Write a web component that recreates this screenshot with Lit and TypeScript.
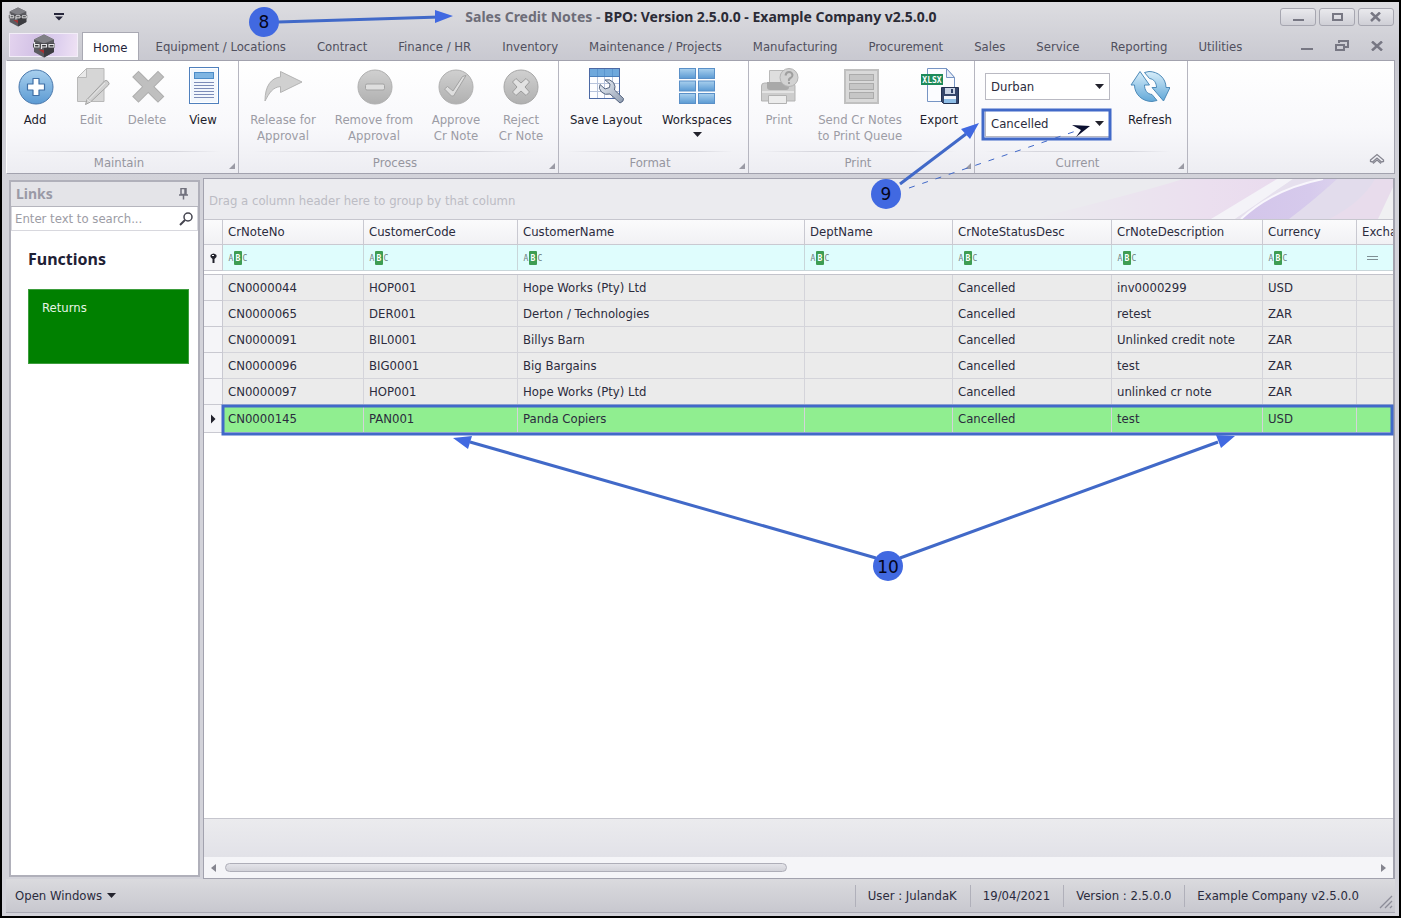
import { LitElement, html, css, svg, nothing } from "lit";
import { customElement, state } from "lit/decorators.js";

const TABS = [
  "Home", "Equipment / Locations", "Contract", "Finance / HR", "Inventory",
  "Maintenance / Projects", "Manufacturing", "Procurement", "Sales", "Service",
  "Reporting", "Utilities",
];

const COLUMNS = [
  "CrNoteNo", "CustomerCode", "CustomerName", "DeptName", "CrNoteStatusDesc",
  "CrNoteDescription", "Currency", "Excha",
];

const ROWS = [
  ["CN0000044", "HOP001", "Hope Works (Pty) Ltd", "", "Cancelled", "inv0000299", "USD", ""],
  ["CN0000065", "DER001", "Derton / Technologies", "", "Cancelled", "retest", "ZAR", ""],
  ["CN0000091", "BIL0001", "Billys Barn", "", "Cancelled", "Unlinked credit note", "ZAR", ""],
  ["CN0000096", "BIG0001", "Big Bargains", "", "Cancelled", "test", "ZAR", ""],
  ["CN0000097", "HOP001", "Hope Works (Pty) Ltd", "", "Cancelled", "unlinked cr note", "ZAR", ""],
  ["CN0000145", "PAN001", "Panda Copiers", "", "Cancelled", "test", "USD", ""],
];

const icon = (body: unknown, w = 40, h = 40) => html`
  <svg class="icon" width=${w} height=${h} viewBox="0 0 ${w} ${h}" aria-hidden="true">
    <defs>
      <linearGradient id="blue" x1="0" y1="0" x2="0" y2="1">
        <stop offset="0" stop-color="#a9d0ee" /><stop offset="1" stop-color="#5b9ad3" />
      </linearGradient>
      <linearGradient id="aqua" x1="0" y1="0" x2="0" y2="1">
        <stop offset="0" stop-color="#d8eefa" /><stop offset="1" stop-color="#62a8d8" />
      </linearGradient>
      <linearGradient id="grey" x1="0" y1="0" x2="0" y2="1">
        <stop offset="0" stop-color="#d0d0d0" /><stop offset="1" stop-color="#b0b0b0" />
      </linearGradient>
      <linearGradient id="steel" x1="0" y1="0" x2="1" y2="1">
        <stop offset="0" stop-color="#eef2f8" /><stop offset="1" stop-color="#8d9bb0" />
      </linearGradient>
    </defs>
    ${body}
  </svg>`;

const ICONS: Record<string, unknown> = {
  add: svg`
    <circle cx="21" cy="20" r="17" fill="url(#blue)" stroke="#4a78ac" />
    <path d="M18 11.500h6v5.500h5.500v6h-5.500v5.500h-6v-5.500h-5.500v-6h5.500z" fill="#fff" stroke="#3f6fa5" stroke-width="1.200" stroke-linejoin="round" />`,
  edit: svg`
    <path d="M15.500 1.500h17.500v33h-26.500v-24z" fill="#d6d6d6" stroke="#b8b8b8" />
    <path d="M15.500 1.500v9h-9z" fill="#e9e9e9" stroke="#b8b8b8" />
    <path d="M16 32.500l17.500-18.500q1.500-1.500 3.500 0.500t0.500 3.500l-18 17l-5 2.500z" fill="#d0d0d0" stroke="#a2a2a2" />
    <path d="M16 32.500l4 3M18.500 32l15.500-16" fill="none" stroke="#e8e8e8" />`,
  delete: svg`
    <g fill="none" stroke-linecap="square" stroke-linejoin="round">
      <path d="M11.500 10L31 29.500M31 10L11.500 29.500" stroke="#aeaeae" stroke-width="9" />
      <path d="M11.500 10L31 29.500M31 10L11.500 29.500" stroke="#bfbfbf" stroke-width="7" />
    </g>`,
  view: svg`
    <rect x="6.500" y="0.500" width="29" height="36" fill="#fff" stroke="#4f80bd" />
    <rect x="8" y="2" width="26" height="33" fill="#f2f7fd" />
    <rect x="11.500" y="5.500" width="19" height="6" fill="#7fb5e2" stroke="#4c8cc8" />
    <path d="M11 15.500h20M11 18.500h20M11 21.500h20M11 24.500h20M11 27.500h20M11 30.500h20" stroke="#7c8cb8" />`,
  release: svg`
    <path d="M2 34c0-15 6-23 15.500-24v-5.500l21.500 10.500l-21.500 10.500v-6c-8 1-11 6-15.500 14.500z" fill="#d0d0d0" stroke="#b4b4b4" stroke-linejoin="round" />`,
  remove: svg`
    <circle cx="21" cy="20" r="17" fill="url(#grey)" stroke="#b0b0b0" />
    <rect x="11.500" y="17" width="19" height="6" rx="1.500" fill="#dedede" stroke="#a3a3a3" />`,
  approve: svg`
    <circle cx="20" cy="20" r="17" fill="url(#grey)" stroke="#b0b0b0" />
    <path d="M8.500 22l3-2.500l5.500 4.500l9.500-14.500l3.500-1l-12.500 20.500h-2z" fill="#dedede" stroke="#a3a3a3" stroke-linejoin="round" />`,
  reject: svg`
    <circle cx="20" cy="20" r="17" fill="url(#grey)" stroke="#a6a6a6" />
    <path d="M15 11.500l5 4.500l5-4.500l3.500 3.500l-4.500 5l4.500 5l-3.500 3.500l-5-4.500l-5 4.500l-3.500-3.500l4.500-5l-4.500-5z" fill="#e2e2e2" stroke="#9b9b9b" stroke-linejoin="round" />`,
  layout: svg`
    <rect x="3.500" y="1.500" width="30" height="30" fill="#fdfdff" stroke="#4c69a4" />
    <rect x="4" y="2" width="29" height="7" fill="#6ea8dc" />
    <path d="M4 9.500h29" stroke="#4a7fbb" />
    <path d="M4 16.500h29M4 24.500h29M11.500 10v21M18.500 10v21M26.500 10v21" stroke="#b8c4dc" />
    <path d="M11.500 2v7M18.500 2v7M26.500 2v7" stroke="#5a95cf" />
    <path d="M19 13q5-1.500 8.500 2.500q2.500 4 1 7.500l9 8.500q0.500 3-3.500 4.500l-10-9q-5 1.500-8.500-2t-1.500-7.500l5 4.500l4.500-1.500l0.500-3.500z" fill="url(#steel)" stroke="#55647f" stroke-linejoin="round" />`,
  workspaces: svg`
    <g fill="url(#blue)" stroke="#5a90c8">
      <rect x="2.500" y="1.500" width="16" height="10" /><rect x="21.500" y="1.500" width="16" height="10" />
      <rect x="2.500" y="14" width="16" height="10" /><rect x="21.500" y="14" width="16" height="10" />
      <rect x="2.500" y="26.500" width="16" height="10" /><rect x="21.500" y="26.500" width="16" height="10" />
    </g>`,
  print: svg`
    <path d="M10.500 17v-13.500h18v13.500z" fill="#dedede" stroke="#b9b9b9" />
    <path d="M2.500 34v-15q0-3 3-3h28q2.500 0 2.500 3v15z" fill="#cdcdcd" stroke="#b3b3b3" />
    <path d="M8 15h22v5q0 3-3 3h-16q-3 0-3-3z" fill="#a9a9a9" />
    <path d="M3 25h32" stroke="#e4e4e4" stroke-width="2" />
    <path d="M9.500 36.500v-8h18v8z" fill="#ececec" stroke="#b2b2b2" />
    <circle cx="30" cy="10.500" r="9" fill="#d2d2d2" stroke="#b3b3b3" />
    <path d="M26.500 8.500q0.500-3.500 3.500-3.500t3.500 3q0 2-2 3t-1.500 3M30 15v2" fill="none" stroke="#9f9f9f" stroke-width="2" />`,
  queue: svg`
    <rect x="5" y="3" width="33" height="33" fill="#d9d9d9" stroke="#c0c0c0" stroke-width="2" />
    <g fill="#c6c6c6" stroke="#ababab"><rect x="9.500" y="7.500" width="24" height="6" /><rect x="9.500" y="16.500" width="24" height="6" /><rect x="9.500" y="25.500" width="24" height="6" /></g>`,
  export: svg`
    <path d="M8.500 1.500h19l8 9v24h-27z" fill="#fbfcff" stroke="#7795c4" />
    <path d="M27.500 1.500v9h8z" fill="#e8eef8" stroke="#7795c4" />
    <rect x="2" y="7" width="22" height="11" fill="#1d8a5a" />
    <text x="13" y="16" text-anchor="middle" font-family="DejaVu Sans Mono" font-weight="bold" font-size="8" fill="#fff">XLSX</text>
    <path d="M22.500 20.500h17v16h-15l-2-2z" fill="#35466b" stroke="#22304f" />
    <rect x="26" y="21" width="10" height="6" fill="#c9d3e4" /><rect x="32" y="22" width="2" height="4" fill="#2d3f66" />
    <rect x="25" y="29" width="12" height="7" fill="#8ebde6" /><rect x="25" y="29" width="12" height="3" fill="#f3f6fb" />`,
  refresh: svg`
    <g fill="url(#aqua)" stroke="#4d8ab8" stroke-linejoin="round">
      <path d="M33.500 34L40 20.500h-4C36 11 28 4.500 19 4.500L14.500 5.500l5 6c4.500 0.500 7 4.500 7 9h-4.500z" />
      <path d="M10 4.500L1 18h3.500C4.500 27 12 34.500 22 34.500L27 33.500l-5-6c-5-0.500-7.500-4.500-7.500-9.500h5z" />
    </g>`,
};

const hexLogo = (size: number) => html`
  <svg width=${size} height=${size} viewBox="0 0 24 24" aria-hidden="true">
    <path d="M12 0.500l10 5v12.500l-10 5.500l-10-5.500v-12.500z" fill="#5b5b60" />
    <path d="M12 0.500l10 5l-10 4l-10-4z" fill="#808086" />
    <path d="M12 14l10-4v8l-10 5.500z" fill="#3c3c40" />
    <path d="M1 9.500h22v4h-22z" fill="#3a3a3e" />
    <path d="M2.500 8v5h4.500v-2.500h-4.500M9.500 15v-4.500h5v2.500h-5M17 10.500h5v2.500h-5z" fill="none" stroke="#e6e6e8" stroke-width="1.200" />
    <path d="M6.500 15.500l5.500 4v-3.500z" fill="#a93030" />
  </svg>`;

const caret = (w = 9, h = 5) => html`
  <svg class="caret" width=${w} height=${h} viewBox="0 0 9 5" aria-hidden="true"><path d="M0 0h9l-4.500 5z" fill="#22222c" /></svg>`;

type Item = { id: string; lines: string[]; width: string; off?: boolean; menu?: boolean };
const GROUPS: { name: string; items: Item[] }[] = [
  { name: "Maintain", items: [
    { id: "add", lines: ["Add"], width: "w56" },
    { id: "edit", lines: ["Edit"], width: "w56", off: true },
    { id: "delete", lines: ["Delete"], width: "w56", off: true },
    { id: "view", lines: ["View"], width: "w56" },
  ] },
  { name: "Process", items: [
    { id: "release", lines: ["Release for", "Approval"], width: "w88", off: true },
    { id: "remove", lines: ["Remove from", "Approval"], width: "w94", off: true },
    { id: "approve", lines: ["Approve", "Cr Note"], width: "w70", off: true },
    { id: "reject", lines: ["Reject", "Cr Note"], width: "w60", off: true },
  ] },
  { name: "Format", items: [
    { id: "layout", lines: ["Save Layout"], width: "w94" },
    { id: "workspaces", lines: ["Workspaces"], width: "w88", menu: true },
  ] },
  { name: "Print", items: [
    { id: "print", lines: ["Print"], width: "w60", off: true },
    { id: "queue", lines: ["Send Cr Notes", "to Print Queue"], width: "w102", off: true },
    { id: "export", lines: ["Export"], width: "w56" },
  ] },
];

@customElement("app-root")
export class AppRoot extends LitElement {
  @state() private tab = "Home";
  @state() private selected = 5;

  static styles = css`
    :host { display: block; font: 13px/16px "DejaVu Sans Condensed", "Noto Sans", sans-serif; color: #2b2b3d; }
    * { box-sizing: border-box; }
    button, input, select { font: inherit; color: inherit; margin: 0; padding: 0; border: 0; background: none; }
    svg { display: block; flex: none; }
    .frame { position: relative; display: flex; flex-direction: column; min-height: 100vh; border: 2px solid #000; padding: 0 4px 3px; background: linear-gradient(#dddde1, #c8c8d0 60px, #d3d3da 180px, #d3d3da); overflow: hidden; }
    .title { display: grid; grid-template-columns: 1fr auto 1fr; align-items: center; height: 29px; padding: 0 1px 0 2px; }
    .title h1 { margin: 0; font-family: "Noto Sans", sans-serif; font-size: 14px; line-height: 16px; font-weight: bold; white-space: pre; color: #2b2b36; }
    .title h1 span { color: #6d6d78; }
    .quick { display: flex; align-items: center; gap: 26px; }
    .winbtns { display: flex; justify-content: flex-end; gap: 3px; }
    .winbtn { display: grid; place-items: center; width: 36px; height: 18px; border: 1px solid #a6a6b0; border-radius: 3px; background: linear-gradient(#e9e9ed, #cfcfd6); }
    .tabs { display: flex; align-items: stretch; gap: 3px; height: 29px; padding: 1px 0 0 3px; }
    .appbtn { display: grid; place-items: center; width: 69px; height: 24px; margin: 1px 1px 0 0; border: 1px solid #f3eef8; background: linear-gradient(100deg, #e3d3ee, #d3c2e6 40%, #ddcfee 70%, #efe2f4); }
    .tab { padding: 2px 14px 0; color: #50505e; white-space: nowrap; }
    .tab.on { padding: 2px 10px 0; background: #fff; border: 1px solid #a9a9b3; border-bottom: 0; color: #23233a; }
    .mdi { display: flex; align-items: center; gap: 22px; margin-left: auto; padding-right: 12px; }
    .ribbon { display: flex; height: 114px; border: 1px solid #a2a2ae; border-left-color: #fff; background: linear-gradient(#fff, #f8f8fb 60%, #ededf2); }
    .group { position: relative; display: flex; flex-direction: column; border-right: 1px solid #b6b6c0; padding-right: 7px; }
    .items { display: flex; flex: 1; padding-top: 6px; }
    .group h2 { margin: 0; height: 22px; padding-top: 3px; border-top: 1px solid transparent; border-image: linear-gradient(90deg, transparent 5%, #d6d6dd 30%, #d6d6dd 75%, transparent 95%) 1; font-size: 13px; line-height: 16px; font-weight: normal; text-align: center; color: #96969f; }
    .launch { position: absolute; right: 3px; bottom: 4px; }
    .item { display: flex; flex-direction: column; align-items: center; white-space: nowrap; color: #1d1d2c; }
    .item:disabled { color: #9c9ca5; }
    .item .icon { margin-bottom: 5px; }
    .item .caret { margin-top: 4px; }
    .w56 { width: 56px; } .w60 { width: 60px; } .w70 { width: 70px; } .w88 { width: 88px; } .w94 { width: 94px; } .w102 { width: 102px; }
    .combos { display: flex; flex-direction: column; gap: 10px; padding: 6px 10px 0 10px; }
    .combo { display: flex; align-items: center; position: relative; width: 125px; height: 27px; border: 1px solid #b9b9c2; background: #fff; }
    .combo select { appearance: none; flex: 1; height: 100%; padding-left: 5px; outline: 0; }
    .combo .caret { position: absolute; right: 5px; pointer-events: none; }
    .collapse { margin: auto 9px 7px auto; }
    .body { display: flex; flex: 1; gap: 3px; padding: 4px 0 0 3px; min-height: 0; }
    .links { display: flex; flex-direction: column; width: 191px; margin: 2px 0; border: 2px solid #b0b0ba; background: #fff; }
    .links header { display: flex; align-items: center; justify-content: space-between; height: 25px; padding: 0 10px 0 5px; background: #e4e4e8; border-bottom: 1px solid #b5b5bd; }
    .links h2 { margin: 0; font-family: "Noto Sans", sans-serif; font-size: 14px; line-height: 16px; color: #9a9aa6; }
    .search { display: flex; align-items: center; height: 24px; padding: 0 4px 0 3px; border: 1px solid #d8d8de; border-top: 0; }
    .search input { flex: 1; min-width: 0; outline: 0; }
    .search input::placeholder { color: #9c9ca5; opacity: 1; }
    .fn { padding: 18px 9px 0 17px; }
    .fn h3 { margin: 0 0 20px; font-family: "Noto Sans", sans-serif; font-size: 16px; line-height: 20px; color: #1f2135; }
    .tile { display: block; width: 100%; height: 75px; padding: 10px 13px; background: #008000; border: 1px solid #3d9d3d; color: #e6f5e6; text-decoration: none; }
    .grid { display: flex; flex-direction: column; flex: 1; min-width: 0; border: 1px solid #a2a2ae; border-right-width: 2px; background: #fff; overflow: hidden; }
    .drop { display: flex; justify-content: space-between; align-items: stretch; height: 41px; border-bottom: 1px solid #c6c6ce; background: #ebebef; color: #bcbcc4; }
    .drop p { margin: 14px 0 0 5px; white-space: nowrap; }
    .scroll { flex: 1; overflow: hidden; }
    table { width: 1241px; table-layout: fixed; border-collapse: separate; border-spacing: 0; }
    th, td { padding: 0 0 0 5px; height: 26px; text-align: left; font-weight: normal; white-space: nowrap; border-right: 1px solid #d4d4da; border-bottom: 1px solid #d4d4da; }
    th { height: 25px; background: linear-gradient(#fbfbfc, #f1f1f4); border-color: #c9c9d1; }
    .filter td { background: #dffdfd; height: 26px; border-color: #c9d6da; }
    .filter label { display: flex; align-items: center; }
    .filter input { width: 50px; height: 20px; outline: 0; }
    .gap td { height: 4px; padding: 0; border-bottom: 1px solid #c3c3cb; border-right: 0; background: #fff; }
    tbody td { background: #ebebeb; }
    tbody tr.sel td { height: 28px; background: #90ee90; }
    tbody td.ind, tbody tr.sel td.ind, .filter td.ind { padding: 0 0 0 6px; background: #f5f5f8; border-color: #c9c9d1; }
    .c0 { width: 19px; } .c1 { width: 141px; } .c2 { width: 154px; } .c3 { width: 287px; } .c4 { width: 148px; }
    .c5 { width: 159px; } .c6 { width: 151px; } .c7 { width: 94px; } .c8 { width: 88px; }
    .foot { height: 39px; border-top: 1px solid #c6c6ce; background: linear-gradient(#ebebee, #e2e2e8); }
    .bar { display: flex; align-items: center; gap: 9px; height: 21px; padding: 0 7px; background: #f5f5f8; }
    .track { flex: 1; }
    .thumb { width: 49%; height: 9px; border: 1px solid #aeaeb8; border-radius: 5px; background: linear-gradient(#e4e4e9, #d2d2d9); }
    .status { display: flex; align-items: center; height: 34px; padding: 0 2px 0 9px; border-bottom: 1px solid #a9a9b4; background: linear-gradient(#dadade, #c8c8cf); white-space: nowrap; }
    .open { display: flex; align-items: center; gap: 5px; margin-right: auto; }
    .status span { padding: 3px 13px 3px 12px; border-left: 1px solid #b0b0ba; }
    .grip { align-self: flex-end; margin: 0 0 3px 7px; }
    .notes { position: absolute; left: -2px; top: -2px; pointer-events: none; }
    .notes text { font: 17px "DejaVu Sans", sans-serif; fill: #05051a; text-anchor: middle; }
  `;

  private renderItem(i: Item) {
    return html`<button class="item ${i.width}" ?disabled=${i.off}>
      ${icon(ICONS[i.id])}
      ${i.lines.map((l) => html`<span>${l}</span>`)}
      ${i.menu ? caret() : nothing}
    </button>`;
  }

  private launcher() {
    return html`<svg class="launch" width="6" height="6" viewBox="0 0 6 6" aria-hidden="true"><path d="M6 0v6h-6z" fill="#9a9aa4" /></svg>`;
  }

  private combo(label: string, options: string[]) {
    return html`<div class="combo">
      <select aria-label=${label}>${options.map((o) => html`<option>${o}</option>`)}</select>${caret()}
    </div>`;
  }

  private filterIcon(last: boolean) {
    return html`<svg width="20" height="14" viewBox="0 0 20 14" aria-hidden="true">
      ${last
        ? svg`<path d="M5 5.500h11M5 8.500h11" stroke="#7f8f94" />`
        : svg`<rect x="6" width="8" height="14" rx="1" fill="#3e9d52" />
          <g font-family="DejaVu Sans Mono" font-size="8" text-anchor="middle">
            <text x="3" y="10" fill="#6f7f80">A</text><text x="10" y="10" fill="#fff" font-weight="bold">B</text><text x="17" y="10" fill="#6f7f80">C</text>
          </g>`}
    </svg>`;
  }

  private annotations() {
    return html`<svg class="notes" width="1401" height="918" viewBox="0 0 1401 918">
      <g fill="none" stroke="#4169c8" stroke-width="3">
        <path d="M278 22L440 17M900 184L966 134M876 558L470 442M900 558L1218 442" />
        <rect x="983" y="110" width="127" height="29" />
        <rect x="223" y="406" width="1169" height="28" />
        <path d="M909 188L1076 131" stroke-width="1" stroke-dasharray="6 8" />
      </g>
      <g fill="#4169e1">
        <path d="M453 16L435 10v13zM979 123L961 129l9 10zM453 438l19-2l-4 13zM1235 436l-19-1l5 13z" />
        <circle cx="264" cy="22" r="15" /><circle cx="886" cy="194" r="15" /><circle cx="888" cy="566" r="15" />
      </g>
      <path d="M1072 125l18 1l-14 11l5-7z" fill="#0b1030" />
      <text x="264" y="28">8</text><text x="886" y="200">9</text><text x="888" y="573">10</text>
    </svg>`;
  }

  render() {
    return html`<div class="frame">
      <header class="title">
        <div class="quick">${hexLogo(20)}
          <svg width="10" height="8" viewBox="0 0 10 8" aria-hidden="true"><path d="M0 0h10v2h-10zM1 3.500h8l-4 4z" fill="#26263a" /></svg>
        </div>
        <h1><span>Sales Credit Notes - </span>BPO: Version 2.5.0.0 - Example Company v2.5.0.0</h1>
        <div class="winbtns">
          <button class="winbtn" aria-label="Minimize"><svg width="12" height="10" viewBox="0 0 12 10"><path d="M1 8h11" stroke="#777783" stroke-width="2" /></svg></button>
          <button class="winbtn" aria-label="Maximize"><svg width="12" height="10" viewBox="0 0 12 10"><rect x="2" y="2" width="9" height="6" fill="none" stroke="#777783" stroke-width="2" /></svg></button>
          <button class="winbtn" aria-label="Close"><svg width="12" height="10" viewBox="0 0 12 10"><path d="M1 0.500l9 8.500M10 0.500l-9 8.500" stroke="#777783" stroke-width="2.500" /></svg></button>
        </div>
      </header>
      <nav class="tabs">
        <button class="appbtn" aria-label="Application menu">${hexLogo(24)}</button>
        ${TABS.map((t) => html`<button class="tab ${t === this.tab ? "on" : ""}" @click=${() => (this.tab = t)}>${t}</button>`)}
        <div class="mdi">
          <svg width="12" height="12" viewBox="0 0 12 12"><path d="M0 9h12" stroke="#777783" stroke-width="2" /></svg>
          <svg width="14" height="12" viewBox="0 0 14 12"><path d="M4 3v-2h9v6h-3M1 5h8v5h-8z" fill="none" stroke="#777783" stroke-width="2" /></svg>
          <svg width="12" height="10" viewBox="0 0 12 10"><path d="M1 0.500l10 9M11 0.500l-10 9" stroke="#777783" stroke-width="2.500" /></svg>
        </div>
      </nav>
      <section class="ribbon">
        ${GROUPS.map((g) => html`<div class="group">
          <div class="items">${g.items.map((i) => this.renderItem(i))}</div>
          <h2>${g.name}</h2>${this.launcher()}
        </div>`)}
        <div class="group">
          <div class="items">
            <div class="combos">
              ${this.combo("Site", ["Durban"])}
              ${this.combo("Status", ["Cancelled"])}
            </div>
            ${this.renderItem({ id: "refresh", lines: ["Refresh"], width: "w60" })}
          </div>
          <h2>Current</h2>${this.launcher()}
        </div>
        <svg class="collapse" width="16" height="13" viewBox="0 0 16 13"><path d="M1.500 7l6.500-5.500l6.500 5.500v1.500l-2 0.500l-4.500-4l-4.500 4l-2-0.500zM4 10.500l4-3.500l4 3.500" fill="none" stroke="#858590" stroke-width="1.300" /></svg>
      </section>
      <main class="body">
        <aside class="links">
          <header><h2>Links</h2>
            <svg width="9" height="12" viewBox="0 0 9 12"><path d="M2 0.500h5v6h-5zM0 7h9M4.500 7v4.500M6 1v5" fill="none" stroke="#71717d" stroke-width="1.500" /></svg>
          </header>
          <label class="search"><input type="text" placeholder="Enter text to search..." aria-label="Search links" />
            <svg width="14" height="14" viewBox="0 0 14 14"><circle cx="9" cy="5" r="4" fill="none" stroke="#44444f" stroke-width="1.500" /><path d="M6 8l-5 5" stroke="#44444f" stroke-width="2" /></svg>
          </label>
          <div class="fn"><h3>Functions</h3><a class="tile" href="#returns">Returns</a></div>
        </aside>
        <section class="grid">
          <div class="drop"><p>Drag a column header here to group by that column</p>
            <svg width="420" height="40" viewBox="0 0 420 40" aria-hidden="true">
              <defs>
                <linearGradient id="s1" x1="0" x2="1"><stop offset="0" stop-color="#ebebef" /><stop offset="0.700" stop-color="#ebdfef" /><stop offset="1" stop-color="#e9dbee" /></linearGradient>
                <linearGradient id="s2" x1="0" x2="1"><stop offset="0" stop-color="#d3c5ea" /><stop offset="0.450" stop-color="#d6caec" /><stop offset="1" stop-color="#e6e0f0" /></linearGradient>
              </defs>
              <path d="M60 40Q180 10 210 0h100L240 40z" fill="url(#s1)" />
              <path d="M238 40L304 0h16L262 40z" fill="#f4f3f8" />
              <path d="M262 40L320 0h34Q300 14 268 40z" fill="#e6e0ee" />
              <path d="M268 40Q300 10 350 0h70v40z" fill="url(#s2)" />
              <path d="M316 40Q340 22 364 0h56v40z" fill="#e2dcec" />
              <path d="M356 40Q388 24 402 0h18v40z" fill="#e8dcec" />
              <path d="M405 40L420 8v32z" fill="#f0f0f2" />
              <path d="M268 40Q300 10 350 0" fill="none" stroke="#f8f6fc" stroke-width="2" />
            </svg>
          </div>
          <div class="scroll">
            <table>
              <colgroup>${[0, 1, 2, 3, 4, 5, 6, 7, 8].map((n) => html`<col class="c${n}" />`)}</colgroup>
              <thead>
                <tr><th></th>${COLUMNS.map((c) => html`<th scope="col">${c}</th>`)}</tr>
                <tr class="filter">
                  <td class="ind"><svg width="7" height="10" viewBox="0 0 7 10"><path d="M0.500 2q3-3 6 0v2l-2 2v4h-2v-4l-2-2z" fill="#22222c" /><path d="M2 2.500h2" stroke="#fff" /></svg></td>
                  ${COLUMNS.map((c, n) => html`<td><label>${this.filterIcon(n === 7)}<input type="text" aria-label="Filter ${c}" /></label></td>`)}
                </tr>
                <tr class="gap"><td colspan="9"></td></tr>
              </thead>
              <tbody>
                ${ROWS.map((r, n) => html`<tr class=${n === this.selected ? "sel" : ""} @click=${() => (this.selected = n)}>
                  <td class="ind">${n === this.selected ? html`<svg width="6" height="10" viewBox="0 0 6 10"><path d="M1 0.500l4.500 4.500l-4.500 4.500z" fill="#22222c" /></svg>` : nothing}</td>
                  ${r.map((c) => html`<td>${c}</td>`)}
                </tr>`)}
              </tbody>
            </table>
          </div>
          <div class="foot"></div>
          <div class="bar">
            <svg width="5" height="8" viewBox="0 0 5 8"><path d="M5 0v8l-5-4z" fill="#85858f" /></svg>
            <div class="track"><div class="thumb"></div></div>
            <svg width="5" height="8" viewBox="0 0 5 8"><path d="M0 0v8l5-4z" fill="#85858f" /></svg>
          </div>
        </section>
      </main>
      <footer class="status">
        <button class="open">Open Windows ${caret()}</button>
        <span>User : JulandaK</span><span>19/04/2021</span><span>Version : 2.5.0.0</span><span>Example Company v2.5.0.0</span>
        <svg class="grip" width="14" height="14" viewBox="0 0 14 14"><path d="M1 13l12-12M6 13l7-7M11 13l2-2" stroke="#8c8c98" stroke-width="1.300" /></svg>
      </footer>
      ${this.annotations()}
    </div>`;
  }
}
